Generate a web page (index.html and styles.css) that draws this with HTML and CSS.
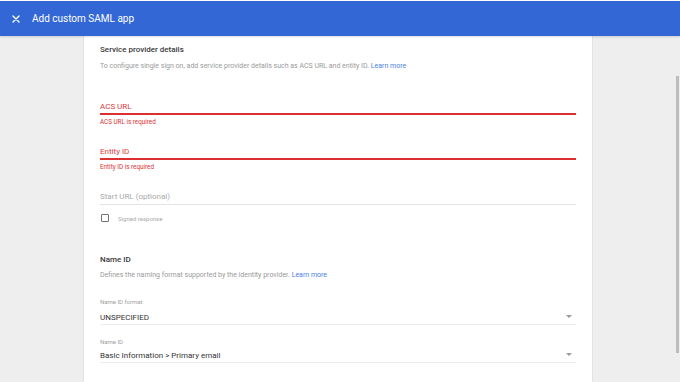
FILE: index.html
```html
<!DOCTYPE html>
<html lang="en">
<head>
    <meta charset="UTF-8">
    <meta name="viewport" content="width=device-width, initial-scale=1.0">
    <title>Add custom SAML app</title>
    <link rel="stylesheet" href="styles.css">
</head>
<body>
    <header class="topbar">
        <svg class="close-icon" width="8" height="8" viewBox="0 0 8 8">
            <path d="M1 1L7 7M7 1L1 7" stroke="#fff" stroke-width="1.4" stroke-linecap="round"/>
        </svg>
        <h1>Add custom SAML app</h1>
    </header>

    <div class="layout">
        <div class="card">
            <h2 class="section-title">Service provider details</h2>
            <p class="section-desc">To configure single sign on, add service provider details such as ACS URL and entity ID. <a href="#">Learn more</a></p>

            <div class="field field-acs">
                <div class="field-input error">ACS URL</div>
                <div class="field-error">ACS URL is required</div>
            </div>

            <div class="field field-entity">
                <div class="field-input error">Entity ID</div>
                <div class="field-error">Entity ID is required</div>
            </div>

            <div class="field field-start">
                <div class="field-input plain">Start URL (optional)</div>
            </div>

            <label class="checkbox-row">
                <span class="checkbox"></span>
                <span class="checkbox-label">Signed response</span>
            </label>

            <h2 class="section-title name-title">Name ID</h2>
            <p class="section-desc name-desc">Defines the naming format supported by the identity provider. <a href="#">Learn more</a></p>

            <div class="select-field first">
                <div class="select-label">Name ID format</div>
                <div class="select-value">UNSPECIFIED<span class="arrow"></span></div>
            </div>

            <div class="select-field second">
                <div class="select-label">Name ID</div>
                <div class="select-value">Basic Information &gt; Primary email<span class="arrow"></span></div>
            </div>
        </div>
    </div>

    <div class="scroll-thumb"></div>
</body>
</html>
```

FILE: styles.css
```css
html, body {
    margin: 0;
    padding: 0;
    height: 100%;
    overflow: hidden;
}

body {
    font-family: Roboto, "Liberation Sans", sans-serif;
    background: #fff;
    color: #333;
}

.topbar {
    margin-top: 1px;
    height: 35px;
    background: #3367d6;
    display: flex;
    align-items: center;
    box-shadow: 0 1px 2px rgba(0, 0, 0, 0.15);
    position: relative;
    z-index: 1;
}

.close-icon {
    margin-left: 12px;
    margin-right: 12px;
}

.topbar h1 {
    margin: 0;
    font-size: 10px;
    font-weight: 400;
    color: #fff;
}

.layout {
    display: flex;
    height: calc(100% - 36px);
    background: #eeeeee;
}

.card {
    margin-left: 83px;
    width: 476px;
    padding: 8px 16px 0;
    background: #fff;
    border-left: 1px solid #e3e3e3;
    border-right: 1px solid #e3e3e3;
}

.section-title {
    margin: 0;
    font-size: 8px;
    line-height: 12px;
    font-weight: 500;
    color: #3a3a3a;
}

.section-desc {
    margin: 5px 0 0;
    font-size: 7px;
    line-height: 10px;
    color: #9a9a9a;
}

.section-desc a {
    color: #4a7fe0;
    text-decoration: none;
}

.field-input {
    font-size: 8px;
    line-height: 12px;
}

.field-input.error {
    color: #de3a3a;
    border-bottom: 2px solid #dc2f2f;
}

.field-input.plain {
    color: #aaaaaa;
    padding-bottom: 1px;
    border-bottom: 1px solid #e4e4e4;
}

.field-error {
    margin-top: 3px;
    font-size: 6.3px;
    line-height: 8px;
    color: #dc2f2f;
}

.field-acs {
    margin-top: 30px;
}

.field-entity,
.field-start {
    margin-top: 20px;
}

.checkbox-row {
    margin-top: 9px;
    display: flex;
    align-items: center;
    height: 8px;
}

.checkbox {
    width: 6px;
    height: 6px;
    margin-left: 1px;
    border: 1.2px solid #707070;
    border-radius: 1px;
}

.checkbox-label {
    margin-left: 9px;
    font-size: 6px;
    color: #aaa;
}

.name-title {
    margin-top: 32px;
}

.name-desc {
    margin-top: 4px;
}

.select-field.first {
    margin-top: 18px;
}

.select-field.second {
    margin-top: 13px;
}

.select-label {
    font-size: 6px;
    line-height: 8px;
    color: #a0a0a0;
}

.select-value {
    position: relative;
    margin-top: 6px;
    font-size: 8px;
    line-height: 12px;
    color: #333;
    border-bottom: 1px solid #ececec;
}

.second .select-value {
    margin-top: 4px;
}

.arrow {
    position: absolute;
    right: 4px;
    top: 3px;
    width: 0;
    height: 0;
    border-left: 3px solid transparent;
    border-right: 3px solid transparent;
    border-top: 3px solid #9a9a9a;
}

.scroll-thumb {
    position: fixed;
    right: 1px;
    top: 76px;
    width: 3px;
    height: 277px;
    background: #bdbdbd;
}
```
